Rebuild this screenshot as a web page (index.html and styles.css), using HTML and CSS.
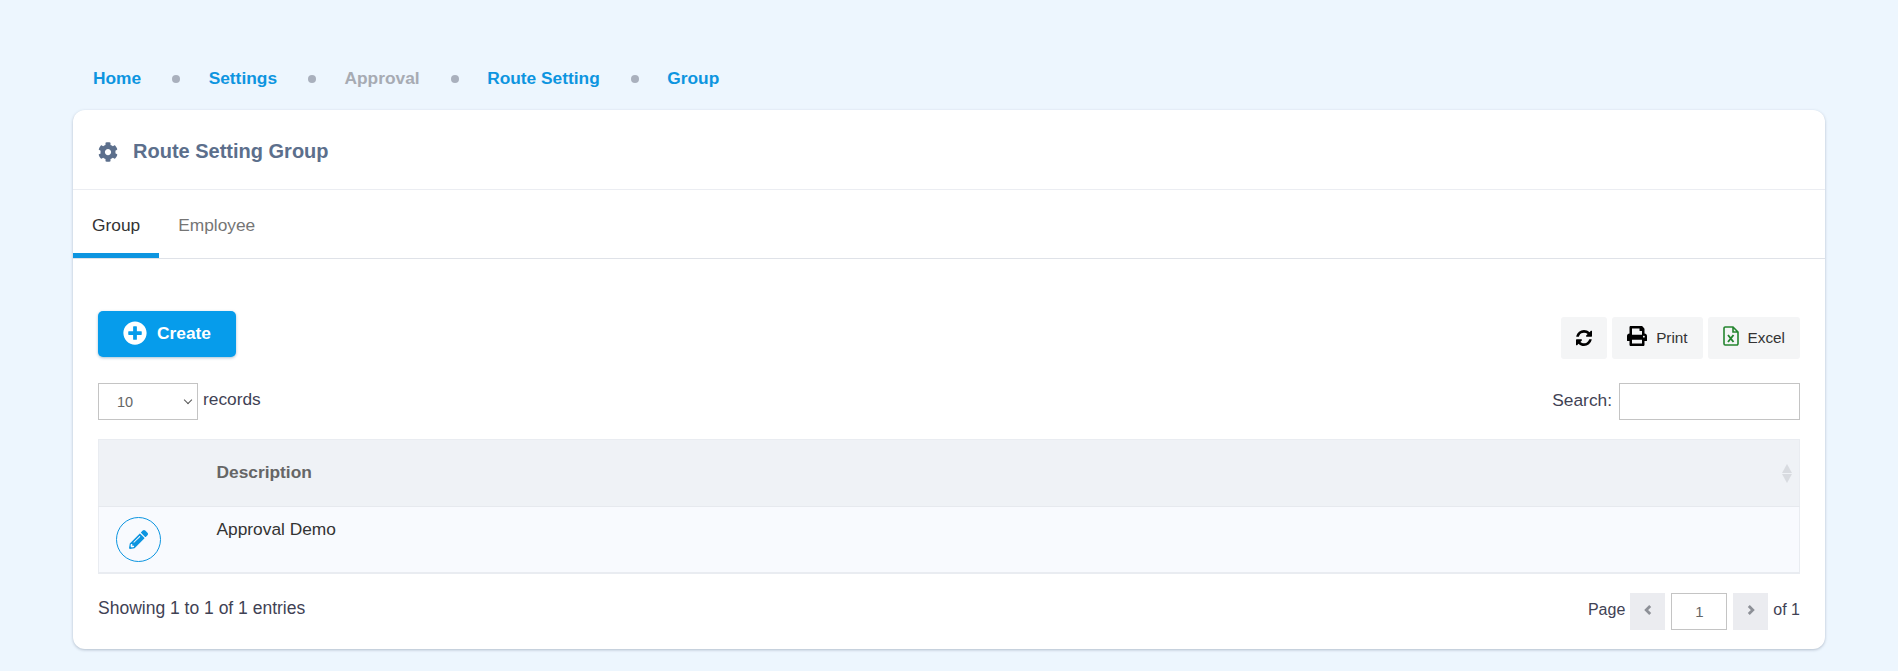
FILE: index.html
```html
<!DOCTYPE html>
<html lang="en">
<head>
<meta charset="utf-8">
<title>Route Setting Group</title>
<link rel="stylesheet" href="styles.css">
</head>
<body>
<nav class="crumbs">
  <a class="crumb" href="#">Home</a><span class="dot"></span>
  <a class="crumb" href="#">Settings</a><span class="dot"></span>
  <span class="crumb muted">Approval</span><span class="dot"></span>
  <a class="crumb" href="#">Route Setting</a><span class="dot"></span>
  <a class="crumb" href="#">Group</a>
</nav>
<main class="card">
  <header class="card-head">
    <svg class="gear" viewBox="0 0 512 512"><path d="M487.4 315.7l-42.6-24.6c4.3-23.2 4.3-47 0-70.2l42.6-24.6c4.9-2.8 7.1-8.6 5.5-14-11.1-35.6-30-67.8-54.7-94.6-3.8-4.1-10-5.1-14.8-2.3L380.8 110c-17.9-15.4-38.5-27.3-60.8-35.1V25.8c0-5.6-3.9-10.5-9.4-11.7-36.7-8.2-74.3-7.8-109.2 0-5.5 1.2-9.4 6.1-9.4 11.7V75c-22.2 7.9-42.8 19.8-60.8 35.1L88.7 85.5c-4.9-2.8-11-1.9-14.8 2.3-24.7 26.7-43.6 58.9-54.7 94.6-1.7 5.4.6 11.2 5.5 14L67.3 221c-4.3 23.2-4.3 47 0 70.2l-42.6 24.6c-4.9 2.8-7.1 8.6-5.5 14 11.1 35.6 30 67.8 54.7 94.6 3.8 4.1 10 5.1 14.8 2.3l42.6-24.6c17.9 15.4 38.5 27.3 60.8 35.1v49.2c0 5.6 3.9 10.5 9.4 11.7 36.7 8.2 74.3 7.8 109.2 0 5.5-1.2 9.4-6.1 9.4-11.7v-49.2c22.2-7.9 42.8-19.8 60.8-35.1l42.6 24.6c4.9 2.8 11 1.9 14.8-2.3 24.7-26.7 43.6-58.9 54.7-94.6 1.5-5.5-.7-11.3-5.6-14.1zM256 336c-44.1 0-80-35.9-80-80s35.9-80 80-80 80 35.9 80 80-35.9 80-80 80z"/></svg>
    <h1 class="title">Route Setting Group</h1>
  </header>
  <div class="tabs">
    <a class="tab active" href="#">Group</a>
    <a class="tab" href="#">Employee</a>
  </div>
  <section class="body">
    <div class="toolbar">
      <button class="create" type="button">
        <svg class="plus" viewBox="0 0 512 512"><path d="M256 8C119 8 8 119 8 256s111 248 248 248 248-111 248-248S393 8 256 8zm144 276c0 6.6-5.4 12-12 12h-92v92c0 6.6-5.4 12-12 12h-56c-6.6 0-12-5.4-12-12v-92h-92c-6.6 0-12-5.4-12-12v-56c0-6.6 5.4-12 12-12h92v-92c0-6.6 5.4-12 12-12h56c6.6 0 12 5.4 12 12v92h92c6.6 0 12 5.4 12 12v56z"/></svg>
        Create
      </button>
      <div class="tools">
        <button class="tool" type="button"><svg class="ico-sync" viewBox="128 128 1536 1536"><path d="M1639 1056q0 5-1 7-64 268-268 434.5t-478 166.5q-146 0-282.5-55t-243.5-157l-129 129q-19 19-45 19t-45-19-19-45v-448q0-26 19-45t45-19h448q26 0 45 19t19 45-19 45l-137 137q71 66 161 102t187 36q134 0 250-65t186-179q11-17 53-117 8-23 30-23h192q13 0 22.5 9.5t9.5 22.5zm25-800v448q0 26-19 45t-45 19h-448q-26 0-45-19t-19-45 19-45l138-138q-148-137-349-137-134 0-250 65t-186 179q-11 17-53 117-8 23-30 23h-199q-13 0-22.5-9.5t-9.5-22.5v-7q65-268 270-434.5t480-166.5q146 0 284 55.5t245 156.5l130-129q19-19 45-19t45 19 19 45z"/></svg></button>
        <button class="tool" type="button"><svg class="ico-print" viewBox="0 0 512 512"><path d="M448 192V77.25c0-8.49-3.37-16.62-9.37-22.63L393.37 9.37c-6-6-14.14-9.37-22.63-9.37H96C78.33 0 64 14.33 64 32v160c-35.35 0-64 28.65-64 64v112c0 8.84 7.16 16 16 16h48v96c0 17.67 14.33 32 32 32h320c17.67 0 32-14.33 32-32v-96h48c8.84 0 16-7.16 16-16V256c0-35.35-28.65-64-64-64zm-64 256H128v-96h256v96zm0-224H128V64h192v48c0 8.84 7.16 16 16 16h48v96zm48 72c-13.25 0-24-10.75-24-24 0-13.26 10.75-24 24-24s24 10.74 24 24c0 13.25-10.75 24-24 24z"/></svg>Print</button>
        <button class="tool" type="button"><svg class="ico-excel" viewBox="0 0 16 20"><path class="sheet" d="M1 2.2a1.2 1.2 0 0 1 1.2-1.2H10l5 5v11.8a1.2 1.2 0 0 1-1.2 1.2H2.2a1.2 1.2 0 0 1-1.2-1.2zM10 1v5h5"/><path class="cross" d="M5 9l5.5 7M10.5 9L5 16"/></svg>Excel</button>
      </div>
    </div>
    <div class="filters">
      <label class="length"><span class="pick-wrap"><select class="pick"><option>10</option><option>25</option><option>50</option></select></span> records</label>
      <label class="search">Search: <input class="find" type="text"></label>
    </div>
    <table class="grid">
      <thead>
        <tr>
          <th class="c-act"></th>
          <th class="c-desc">Description<span class="sort"><i class="up"></i><i class="down"></i></span></th>
        </tr>
      </thead>
      <tbody>
        <tr>
          <td class="c-act"><a class="edit" href="#"><svg class="ico-pen" viewBox="0 0 512 512"><path d="M497.9 142.1l-46.1 46.1c-4.7 4.7-12.3 4.7-17 0l-111-111c-4.7-4.7-4.7-12.3 0-17l46.1-46.1c18.7-18.7 49.1-18.7 67.9 0l60.1 60.1c18.8 18.7 18.8 49.1 0 67.9zM284.2 99.8L21.6 362.4.4 483.9c-2.9 16.4 11.4 30.6 27.8 27.8l121.5-21.3 262.6-262.6c4.7-4.7 4.7-12.3 0-17l-111-111c-4.8-4.7-12.4-4.7-17.1 0zM124.1 339.9c-5.5-5.5-5.5-14.3 0-19.8l154-154c5.5-5.5 14.3-5.5 19.8 0s5.5 14.3 0 19.8l-154 154c-5.5 5.5-14.3 5.5-19.8 0zM88 424h48v36.3l-64.5 11.3-31.1-31.1L51.7 376H88v48z"/></svg></a></td>
          <td class="c-text">Approval Demo</td>
        </tr>
      </tbody>
    </table>
    <div class="foot">
      <span class="info">Showing 1 to 1 of 1 entries</span>
      <div class="pager">
        <span>Page</span>
        <button class="nav" type="button"><svg class="chev" viewBox="0 0 10 14"><path d="M7.2 3L3.2 7l4 4"/></svg></button>
        <input class="page" type="text" value="1">
        <button class="nav" type="button"><svg class="chev" viewBox="0 0 10 14"><path d="M2.8 3l4 4-4 4"/></svg></button>
        <span>of 1</span>
      </div>
    </div>
  </section>
</main>
</body>
</html>
```
FILE: styles.css
```css
* { box-sizing: border-box; }
html, body { margin: 0; height: 100%; }
body {
  background: #edf6fe;
  font-family: "Liberation Sans", Arial, sans-serif;
  font-size: 17.33px;
  color: #3f4254;
  padding: 57px 73px 0;
  overflow: hidden;
}
a { text-decoration: none; }
button { font-family: inherit; border: 0; padding: 0; cursor: pointer; }

.crumbs {
  display: flex;
  align-items: center;
  height: 40px;
  margin-bottom: 13px;
  padding: 2px 0 0 20px;
}
.crumb { font-weight: 700; color: #0d95e0; line-height: 20px; }
.crumb.muted { color: #a7abb3; }
.dot {
  width: 8px;
  height: 8px;
  border-radius: 50%;
  background: #a9b0bd;
  margin: 2px 28.5px 0 31px;
}

.card {
  background: #fff;
  height: 539px;
  border-radius: 12px;
  box-shadow: 0 1px 3px rgba(90, 105, 130, .4);
}
.card-head {
  display: flex;
  align-items: center;
  height: 80px;
  padding: 4px 0 0 25px;
  border-bottom: 1px solid #ebedf2;
}
.gear { width: 20px; height: 20px; fill: #5c6f8c; margin-right: 15px; }
.title { margin: 0; font-size: 20px; font-weight: 700; color: #5c6f8c; }

.tabs {
  display: flex;
  height: 69px;
  border-bottom: 1px solid #dfe2e8;
}
.tab {
  display: flex;
  align-items: center;
  padding: 8px 19px 0;
  color: #757575;
  border-bottom: 5px solid transparent;
}
.tab.active { color: #333; border-bottom-color: #0d95e0; }

.body { padding: 52px 25px 0; }
.toolbar { display: flex; justify-content: space-between; height: 46px; }
.create {
  display: flex;
  align-items: center;
  gap: 10px;
  width: 138px;
  height: 46px;
  padding: 0 0 2px 25px;
  background: #069ceb;
  color: #fff;
  font-size: 17.33px;
  font-weight: 700;
  border-radius: 5px;
  box-shadow: 0 1px 3px rgba(0, 80, 130, .35);
}
.plus { width: 24px; height: 24px; fill: #fff; }
.tools { display: flex; gap: 5px; padding-top: 6px; height: 46px; }
.tool {
  display: flex;
  align-items: center;
  gap: 9px;
  height: 42px;
  padding: 0 15px;
  background: #f4f5f6;
  color: #333;
  font-size: 15.3px;
  border-radius: 3px;
}
.ico-sync { width: 16px; height: 16px; fill: #000; }
.ico-print { width: 20px; height: 20px; fill: #000; margin-top: -4px; }
.ico-excel { width: 16px; height: 20px; margin-top: -4px; }
.sheet { fill: none; stroke: #24852f; stroke-width: 1.6; }
.cross { fill: none; stroke: #24852f; stroke-width: 1.9; }

.filters {
  display: flex;
  justify-content: space-between;
  margin-top: 26px;
  height: 37px;
}
.length { display: flex; align-items: flex-start; gap: 5px; line-height: 33px; }
.pick-wrap { position: relative; display: block; width: 100px; height: 37px; }
.pick-wrap::after {
  content: "";
  position: absolute;
  right: 7px;
  top: 14px;
  width: 5px;
  height: 5px;
  border-right: 1px solid #555;
  border-bottom: 1px solid #555;
  transform: rotate(45deg);
  pointer-events: none;
}
.pick {
  display: block;
  appearance: none;
  width: 100px;
  height: 37px;
  padding: 0 0 0 18px;
  background: #fff;
  border: 1px solid #c4c4c4;
  color: #666;
  font-family: inherit;
  font-size: 14.5px;
  border-radius: 0;
}
.search { display: flex; align-items: flex-start; gap: 7px; line-height: 34px; }
.find {
  width: 181px;
  height: 37px;
  border: 1px solid #c4c4c4;
  background: #fff;
  border-radius: 0;
}

.grid {
  width: 100%;
  margin-top: 19px;
  border-collapse: collapse;
  border: 1px solid #e9ecf1;
  border-bottom-width: 2px;
}
.grid th {
  height: 67px;
  background: #eff2f6;
  color: #666;
  font-weight: 700;
  text-align: left;
  border-bottom: 1px solid #e6e9ee;
}
.c-act { width: 117px; }
.c-desc { position: relative; padding-bottom: 3px; }
.sort { position: absolute; right: 7px; top: 24px; display: grid; gap: 1px; }
.up, .down { display: block; width: 0; height: 0; border: 5px solid transparent; }
.up { border-top: 0; border-bottom: 9px solid #d8dbe0; }
.down { border-bottom: 0; border-top: 9px solid #d8dbe0; }
.grid td { height: 66px; background: #f8fafe; vertical-align: top; }
.c-text { padding-top: 12px; line-height: 20px; color: #333; }
.grid td.c-act { padding: 10px 0 0 17px; }
.edit {
  display: flex;
  align-items: center;
  justify-content: center;
  width: 45px;
  height: 45px;
  border: 1px solid #0d95e0;
  border-radius: 50%;
}
.ico-pen { width: 19px; height: 19px; fill: #0d95e0; }

.foot {
  display: flex;
  justify-content: space-between;
  align-items: flex-start;
  margin-top: 19px;
}
.info { font-size: 17.5px; line-height: 31px; color: #3f4254; }
.pager {
  display: flex;
  align-items: flex-start;
  gap: 5px;
  font-size: 16px;
  line-height: 33px;
}
.nav {
  display: flex;
  align-items: center;
  justify-content: center;
  width: 35px;
  height: 37px;
  background: #ebecf0;
}
.chev { width: 10px; height: 14px; margin-top: -3px; fill: none; stroke: #8d9097; stroke-width: 2.8; }
.page {
  width: 56px;
  height: 37px;
  margin: 0 1px;
  border: 1px solid #c4c4c4;
  border-radius: 0;
  background: #fff;
  color: #666;
  font-family: inherit;
  font-size: 15px;
  text-align: center;
}
```
